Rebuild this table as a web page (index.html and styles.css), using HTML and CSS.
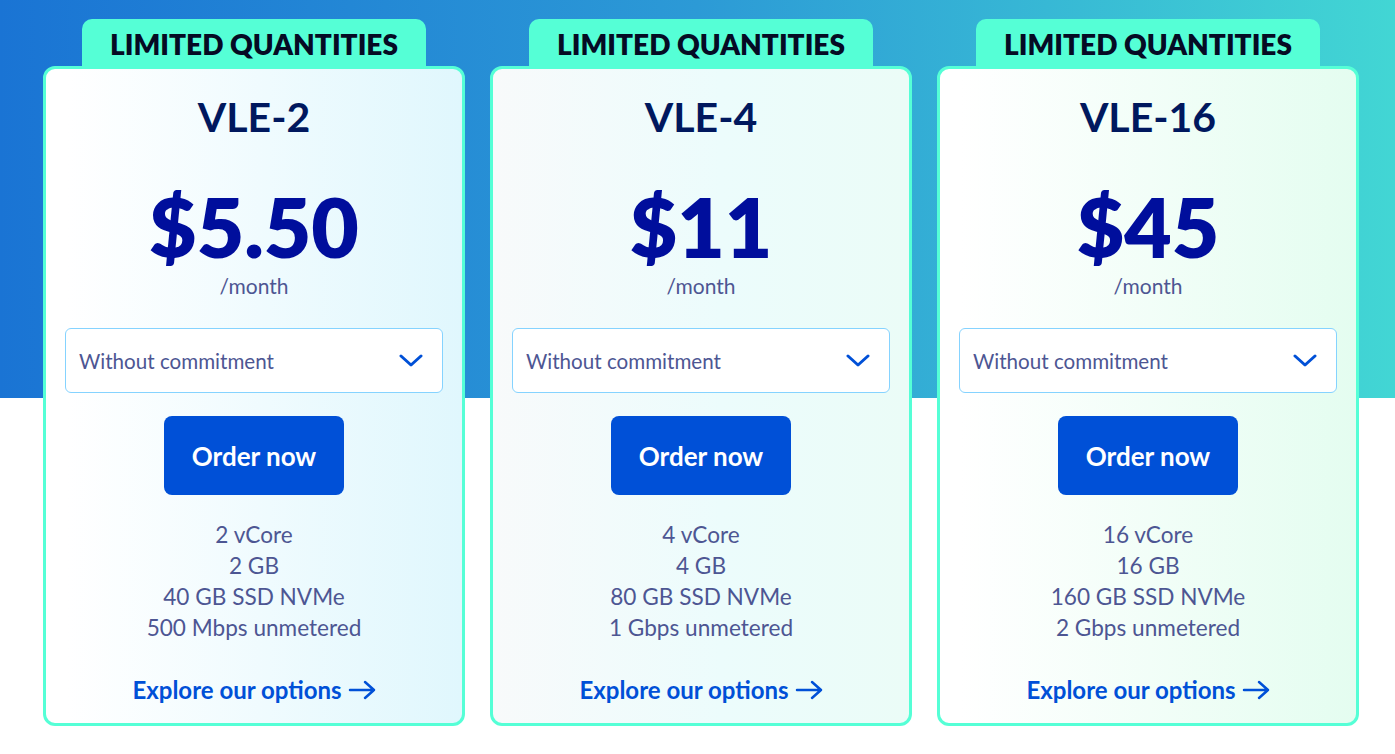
FILE: index.html
```html
<!DOCTYPE html>
<html lang="en">
<head>
<meta charset="utf-8">
<title>VLE plans</title>
<link rel="stylesheet" href="styles.css">
</head>
<body>
<div class="page">
  <div class="plans">
    <div class="plan">
      <div class="tab">LIMITED QUANTITIES</div>
      <div class="card card-a">
        <h2 class="title">VLE-2</h2>
        <div class="price">$5.50</div>
        <div class="period">/month</div>
        <div class="select">
          <span>Without commitment</span>
          <svg class="chev" width="24" height="14" viewBox="0 0 24 14"><polyline points="2,2 12,11 22,2" fill="none" stroke="#0050d7" stroke-width="3" stroke-linecap="round" stroke-linejoin="round"/></svg>
        </div>
        <button class="order">Order now</button>
        <ul class="specs">
          <li>2 vCore</li>
          <li>2 GB</li>
          <li>40 GB SSD NVMe</li>
          <li>500 Mbps unmetered</li>
        </ul>
        <a class="explore" href="#">Explore our options <svg width="28" height="20" viewBox="0 0 28 20"><path d="M2 10H26M17 2L26 10L17 18" fill="none" stroke="#0050d7" stroke-width="2.5" stroke-linecap="round" stroke-linejoin="round"/></svg></a>
      </div>
    </div>
    <div class="plan">
      <div class="tab">LIMITED QUANTITIES</div>
      <div class="card card-b">
        <h2 class="title">VLE-4</h2>
        <div class="price">$11</div>
        <div class="period">/month</div>
        <div class="select">
          <span>Without commitment</span>
          <svg class="chev" width="24" height="14" viewBox="0 0 24 14"><polyline points="2,2 12,11 22,2" fill="none" stroke="#0050d7" stroke-width="3" stroke-linecap="round" stroke-linejoin="round"/></svg>
        </div>
        <button class="order">Order now</button>
        <ul class="specs">
          <li>4 vCore</li>
          <li>4 GB</li>
          <li>80 GB SSD NVMe</li>
          <li>1 Gbps unmetered</li>
        </ul>
        <a class="explore" href="#">Explore our options <svg width="28" height="20" viewBox="0 0 28 20"><path d="M2 10H26M17 2L26 10L17 18" fill="none" stroke="#0050d7" stroke-width="2.5" stroke-linecap="round" stroke-linejoin="round"/></svg></a>
      </div>
    </div>
    <div class="plan">
      <div class="tab">LIMITED QUANTITIES</div>
      <div class="card card-c">
        <h2 class="title">VLE-16</h2>
        <div class="price">$45</div>
        <div class="period">/month</div>
        <div class="select">
          <span>Without commitment</span>
          <svg class="chev" width="24" height="14" viewBox="0 0 24 14"><polyline points="2,2 12,11 22,2" fill="none" stroke="#0050d7" stroke-width="3" stroke-linecap="round" stroke-linejoin="round"/></svg>
        </div>
        <button class="order">Order now</button>
        <ul class="specs">
          <li>16 vCore</li>
          <li>16 GB</li>
          <li>160 GB SSD NVMe</li>
          <li>2 Gbps unmetered</li>
        </ul>
        <a class="explore" href="#">Explore our options <svg width="28" height="20" viewBox="0 0 28 20"><path d="M2 10H26M17 2L26 10L17 18" fill="none" stroke="#0050d7" stroke-width="2.5" stroke-linecap="round" stroke-linejoin="round"/></svg></a>
      </div>
    </div>
  </div>
</div>
</body>
</html>
```

FILE: styles.css
```css
* { box-sizing: border-box; }
html, body { margin: 0; padding: 0; background: #ffffff; }
body {
  font-family: Lato, "Noto Sans", sans-serif;
  width: 1395px;
  height: 754px;
  overflow: hidden;
}
.page {
  height: 754px;
  background: linear-gradient(90deg, #1a74d4 0%, #2c9ad6 50%, #42d6d4 100%) no-repeat;
  background-size: 100% 398px;
}
.plans {
  display: flex;
  gap: 25px;
  padding: 19px 0 0 43px;
}
.plan {
  display: flex;
  flex-direction: column;
  align-items: center;
  width: 422px;
}
.tab {
  width: 344px;
  height: 47px;
  background: #55ffd6;
  border-radius: 10px 10px 0 0;
  color: #050b24;
  font-weight: 800;
  font-size: 28px;
  line-height: 51px;
  text-align: center;
}
.card {
  width: 422px;
  height: 660px;
  border: 3px solid #55ffd6;
  border-radius: 12px;
  padding: 24px 19px 0;
  display: flex;
  flex-direction: column;
  align-items: center;
}
.card-a { background: linear-gradient(90deg, #ffffff 5%, #e0f7fd 100%); }
.card-b { background: linear-gradient(90deg, #f8fafb 0%, #ecfcfc 55%, #ebfcf7 100%); }
.card-c { background: linear-gradient(90deg, #ffffff 5%, #e4fdf0 100%); }
.title {
  margin: 0;
  font-size: 41px;
  line-height: 48px;
  font-weight: 700;
  color: #00185e;
}
.price {
  margin-top: 40px;
  font-size: 82px;
  line-height: 90px;
  font-weight: 800;
  color: #000e9c;
}
.period {
  margin-top: 1px;
  font-size: 21px;
  line-height: 28px;
  color: #4d5693;
}
.select {
  margin-top: 28px;
  width: 100%;
  height: 65px;
  background: #ffffff;
  border: 1px solid #85d3ff;
  border-radius: 6px;
  display: flex;
  align-items: center;
  justify-content: space-between;
  padding: 0 19px 0 13px;
  font-size: 20.6px;
  color: #4d5693;
}
.chev { display: block; }
.order {
  margin-top: 23px;
  width: 180px;
  height: 79px;
  border: 0;
  border-radius: 8px;
  background: #0050d7;
  color: #ffffff;
  font-family: inherit;
  font-size: 26px;
  font-weight: 700;
  padding: 0;
}
.specs {
  list-style: none;
  margin: 24px 0 0;
  padding: 0;
  text-align: center;
  font-size: 22.6px;
  line-height: 31px;
  color: #4d5693;
}
.explore {
  margin-top: 31px;
  display: flex;
  align-items: center;
  gap: 6px;
  font-size: 24px;
  line-height: 32px;
  font-weight: 700;
  color: #0050d7;
  text-decoration: none;
}
.explore svg { display: block; }
```
